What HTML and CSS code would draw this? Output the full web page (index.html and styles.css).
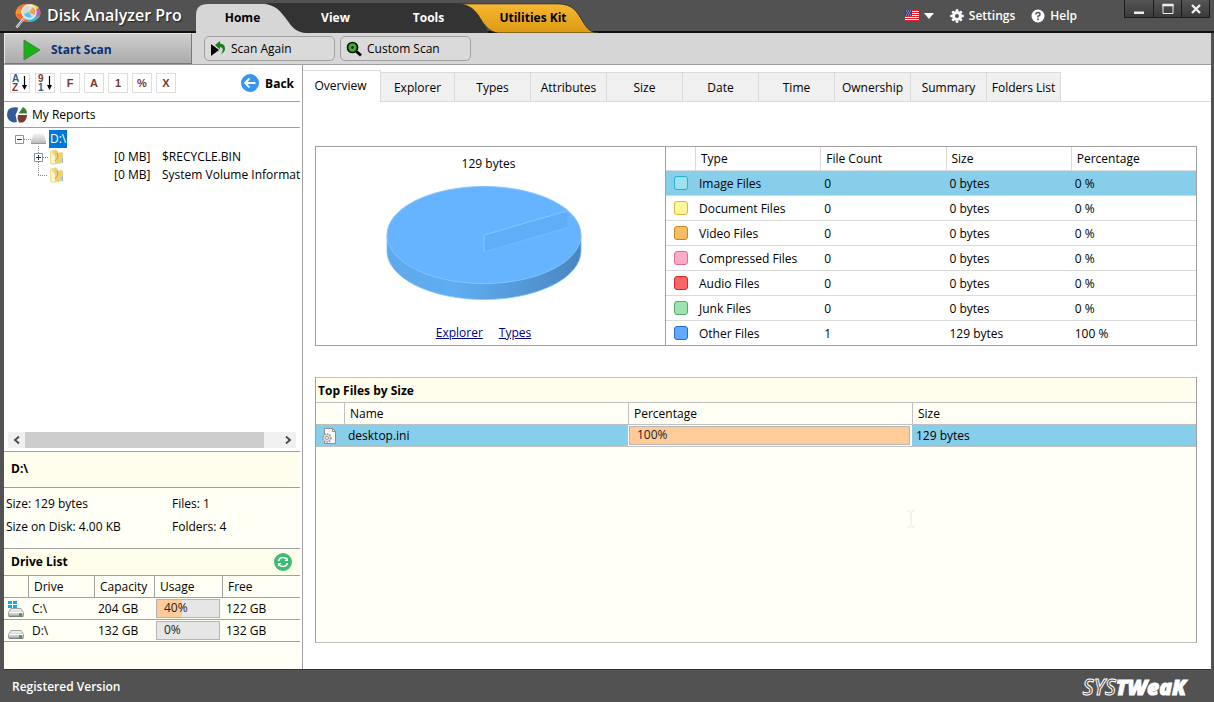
FILE: index.html
```html
<!DOCTYPE html>
<html lang="en">
<head>
<meta charset="utf-8">
<title>Disk Analyzer Pro</title>
<link rel="stylesheet" href="styles.css">
</head>
<body>
<svg class="defs" width="0" height="0" aria-hidden="true">
  <defs>
    <linearGradient id="folderG" x1="0" x2="1" y1="0" y2="0"><stop offset="0" stop-color="#fbf0ae"/><stop offset="1" stop-color="#e3bf4c"/></linearGradient>
    <linearGradient id="driveG" x1="0" x2="0" y1="0" y2="1"><stop offset="0" stop-color="#f4f4f4"/><stop offset="1" stop-color="#b8b8b8"/></linearGradient>
    <symbol id="folder" viewBox="0 0 16 16">
      <path d="M1.500 2l5-1 2 1.500v11.500l-4 1.500-3-1z" fill="url(#folderG)" stroke="#e3cf7c" stroke-width=".6"/>
      <path d="M8 4l4.500-1 1.500 1v9.500l-5 1.500-3-1V8z" fill="#ecd277"/>
      <path d="M2.500 4l3.500 3v8L2.500 14z" fill="#fff6c4"/><path d="M8.500 4v5L6 12" fill="none" stroke="#b79a38" stroke-width=".8"/>
      <path d="M13.500 9v5" stroke="#8fb9d8"/>
    </symbol>
    <symbol id="drive" viewBox="0 0 16 9">
      <path d="M3 .5h10l2.500 4v3q0 1-1 1h-13q-1 0-1-1v-3z" fill="url(#driveG)" stroke="#8a8a8a" stroke-width=".8"/>
      <path d="M1 4.500h14" stroke="#fff"/><path d="M1 8.200h14" stroke="#666" stroke-width=".8"/>
      <path d="M11.500 5.500h2v2h-2z" fill="#35b028" stroke="#555" stroke-width=".5"/>
    </symbol>
  </defs>
</svg>

<header class="titlebar">
  <div class="brand">
    <svg width="28" height="28" viewBox="0 0 28 28" aria-hidden="true">
      <ellipse cx="14" cy="12" rx="12.500" ry="9" fill="#f39a24"/>
      <path d="M14 12L3 7Q8 2 15 3z" fill="#f7742c"/>
      <path d="M14 12L24 6Q28 11 25 16z" fill="#b25fc8"/>
      <path d="M14 12L25 16Q22 21 14 21z" fill="#35b6ea"/>
      <path d="M2 13Q4 19 14 21V12z" fill="#ff5e2e"/>
      <path d="M15 3Q22 3 25 7L14 12z" fill="#ffc83c"/>
      <circle cx="15" cy="11" r="7" fill="#cfe9f7" fill-opacity=".85" stroke="#e7eef2" stroke-width="1.500"/>
      <path d="M15 11l4-5a6 6 0 0 1 1.500 8z" fill="#f6a04c"/><path d="M10 13a6 6 0 0 0 8 3l-3-5z" fill="#5ac4ec"/>
      <path d="M10.500 16.500L2.500 26.500" stroke="#d5d9dc" stroke-width="2.600"/><path d="M10.500 17L3 26" stroke="#8b9298"/>
    </svg>
    <h1>Disk Analyzer Pro</h1>
  </div>
  <nav class="ribbon">
    <svg class="ribbon-shape" width="404" height="30" viewBox="0 0 404 30" aria-hidden="true">
      <defs><linearGradient id="gold" x1="0" x2="0" y1="0" y2="1"><stop offset="0" stop-color="#f7b733"/><stop offset="1" stop-color="#dc9a12"/></linearGradient></defs>
      <path d="M70 0H270Q286 2 292 30H80z" fill="#333"/>
      <path d="M262 .8H362C377 1 381 9 386 17C391 26 395 29.500 402 30H302C292 29 287 20 282 12C277 5 272 2 262 .8z" fill="url(#gold)" stroke="#333"/>
      <path d="M0 30V12Q0 1 12 1H66C80 1 85 9 91 17C97 26 102 29.500 110 30z" fill="#d6d6d6"/>
    </svg>
    <button class="rt home">Home</button>
    <button class="rt">View</button>
    <button class="rt">Tools</button>
    <button class="rt kit">Utilities Kit</button>
  </nav>
  <div class="tools">
    <button class="tool lang" aria-label="Language">
      <svg width="14" height="11" viewBox="0 0 14 11"><path d="M0 0h14v11H0z" fill="#fff"/><path d="M0 .5h14M0 2.500h14M0 4.500h14M0 6.500h14M0 8.500h14M0 10.500h14" stroke="#e8202a"/><path d="M0 0h7v6H0z" fill="#33408e"/><path d="M1 1h1M3 1h1M5 1h1M2 3h1M4 3h1M1 5h1M3 5h1M5 5h1" stroke="#b9c0e8"/></svg>
      <svg width="10" height="6" viewBox="0 0 10 6"><path d="M0 0h10L5 6z" fill="#fff"/></svg>
    </button>
    <button class="tool settings">
      <svg width="14" height="14" viewBox="-7 -7 14 14"><circle r="3.500" fill="none" stroke="#fff" stroke-width="3"/><g stroke="#fff" stroke-width="2.600"><path d="M0-6.700v2M0 6.700v-2M-6.700 0h2M6.700 0h-2M-4.700-4.700l1.500 1.500M4.700 4.700l-1.500-1.500M-4.700 4.700l1.500-1.500M4.700-4.700l-1.500 1.500"/></g></svg>
      Settings</button>
    <button class="tool">
      <svg width="14" height="14" viewBox="0 0 14 14"><circle cx="7" cy="7" r="6.500" fill="#fff"/><path d="M4.900 5.500Q5 3.500 7 3.500T9 5.400Q9 6.500 7 7.300V8.500" fill="none" stroke="#525252" stroke-width="1.500"/><path d="M6.200 9.600h1.600v1.600H6.200z" fill="#525252"/></svg>
      Help</button>
  </div>
  <div class="winbtns">
    <button aria-label="Minimize"><svg width="12" height="12" viewBox="0 0 12 12"><path d="M1 8.500h10v2.500H1z" fill="#eee"/></svg></button>
    <button aria-label="Maximize"><svg width="12" height="12" viewBox="0 0 12 12"><path d="M1 1.500h10v9H1z" fill="none" stroke="#eee"/><path d="M.5 2h11" stroke="#eee" stroke-width="2.500"/></svg></button>
    <button aria-label="Close"><svg width="12" height="12" viewBox="0 0 12 12"><path d="M2 2l8 8M10 2l-8 8" stroke="#eee" stroke-width="2.400"/></svg></button>
  </div>
</header>

<div class="frame">
  <div class="actions">
    <button class="start"><svg width="18" height="22" viewBox="0 0 18 22"><path d="M1 1l16 10L1 21z" fill="#14b414" stroke="#4e7d4e"/></svg>Start Scan</button>
    <button class="act again"><svg width="16" height="16" viewBox="0 0 16 16"><path d="M1 3v12l8-6z" fill="#000"/><path d="M5 4l5-4v2.500Q15 3 15 7.500Q15 11 11 13Q13.500 9 12.500 7.500Q12 6 10 6v2.500z" fill="#17821a"/></svg>Scan Again</button>
    <button class="act"><svg width="16" height="16" viewBox="0 0 16 16"><circle cx="6.500" cy="6.500" r="5" fill="#3fae2a" stroke="#111" stroke-width="1.700"/><path d="M5 6.500h3M6.500 5v3" stroke="#0b3d0b" stroke-width="1.300"/><path d="M10.500 10.500l4.500 4" stroke="#000" stroke-width="3"/></svg>Custom Scan</button>
  </div>

  <div class="main">
    <aside class="side">
      <div class="sortbar">
        <button class="sort" aria-label="Sort by name"><svg width="18" height="18" viewBox="0 0 18 18"><text x="1" y="8" class="s blue">A</text><text x="1" y="17" class="s red">Z</text><path d="M13.500 2v11" stroke="#000" stroke-width="1.200"/><path d="M11 11h5l-2.500 5z"/></svg></button>
        <button class="sort" aria-label="Sort by size"><svg width="18" height="18" viewBox="0 0 18 18"><text x="2" y="8" class="s red">9</text><text x="2" y="17" class="s blue">1</text><path d="M13.500 2v11" stroke="#000" stroke-width="1.200"/><path d="M11 11h5l-2.500 5z"/></svg></button>
        <button>F</button><button>A</button><button>1</button><button>%</button><button>X</button>
        <button class="back"><svg width="18" height="18" viewBox="0 0 18 18"><circle cx="9" cy="9" r="9" fill="#3595f6"/><path d="M14.500 9H4.500M8.500 4.500L4 9l4.500 4.500" fill="none" stroke="#fff" stroke-width="1.800"/></svg>Back</button>
      </div>
      <div class="reports">
        <svg width="22" height="18" viewBox="0 0 22 18"><path d="M12 1.500Q1 0 1 8.500Q1 14 6 16Q9 17 11 15.500L9.500 9Q12 5 12 1.500z" fill="#2f5b96"/><path d="M12.500 7.500L17 1q4 2 4 6.500z" fill="#3f7c35"/><path d="M12 9h9q0 5-4 7.500h-4l-1.500-4z" fill="#7a3a30"/></svg>
        My Reports</div>
      <div class="treewrap">
        <ul class="tree">
          <li><div class="node root"><svg width="35" height="18" viewBox="0 0 35 18"><path d="M12 9.500h7M26.500 16v2" stroke="#888" stroke-dasharray="1 1"/><path d="M3.500 5.500h8v8h-8z" fill="#fff" stroke="#8496a8"/><path d="M5 9.500h5" stroke="#234"/><path d="M22 3.500h9l3 7.500v3H19v-3z" fill="url(#driveG)"/><path d="M19 13.500h15" stroke="#999"/></svg><span class="sel">D:\</span></div>
            <ul>
              <li class="node"><svg width="37" height="18" viewBox="0 0 37 18"><path d="M10.500 0v18M15 9.500h5" stroke="#888" stroke-dasharray="1 1"/><path d="M6.500 5.500h8v8h-8z" fill="#fff" stroke="#8496a8"/><path d="M8 9.500h5M10.500 7v5" stroke="#234"/><use href="#folder" x="21" y="1" width="16" height="16"/></svg><span class="mb">[0 MB]</span><span>$RECYCLE.BIN</span></li>
              <li class="node"><svg width="37" height="18" viewBox="0 0 37 18"><path d="M10.500 0v9M10 9.500h10" stroke="#888" stroke-dasharray="1 1"/><use href="#folder" x="21" y="1" width="16" height="16"/></svg><span class="mb">[0 MB]</span><span>System Volume Informat</span></li>
            </ul>
          </li>
        </ul>
        <div class="hscroll">
          <button aria-label="Scroll left"><svg width="8" height="8" viewBox="0 0 8 8"><path d="M6 .5L2 4l4 3.500" fill="none" stroke="#444" stroke-width="1.800"/></svg></button>
          <div class="track"><div class="thumb"></div></div>
          <button aria-label="Scroll right"><svg width="8" height="8" viewBox="0 0 8 8"><path d="M2 .5L6 4 2 7.500" fill="none" stroke="#444" stroke-width="1.800"/></svg></button>
        </div>
      </div>
      <h2 class="path">D:\</h2>
      <div class="info"><span>Size: 129 bytes</span><span>Files: 1</span><span>Size on Disk: 4.00 KB</span><span>Folders: 4</span></div>
      <div class="dlhead"><h2>Drive List</h2>
        <button aria-label="Refresh"><svg width="18" height="18" viewBox="0 0 18 18"><circle cx="9" cy="9" r="9" fill="#3dbb74"/><path d="M4.500 8Q5.500 4.500 9 4.500Q11.500 4.500 13 6.500M13.500 10Q12.500 13.500 9 13.500Q6.500 13.500 5 11.500" fill="none" stroke="#fff" stroke-width="1.500"/><path d="M14 4.500v3.500h-3.500zM4 13.500v-3.500h3.500z" fill="#fff"/></svg></button>
      </div>
      <table class="drives">
        <colgroup><col class="d1"><col class="d2"><col class="d3"><col class="d4"><col></colgroup>
        <thead><tr><th></th><th>Drive</th><th>Capacity</th><th>Usage</th><th>Free</th></tr></thead>
        <tbody>
          <tr><td><svg width="16" height="17" viewBox="0 0 16 17"><path d="M0 1h4v3H0zM5 1h4v3H5zM0 5h4v3H0zM5 5h4v3H5z" fill="#0fadee"/><use href="#drive" y="8" width="16" height="9"/></svg></td><td>C:\</td><td>204 GB</td><td class="barcell"><div class="bar"><div class="fill" style="width:40%"></div><span>40%</span></div></td><td>122 GB</td></tr>
          <tr><td><svg width="16" height="17" viewBox="0 0 16 17"><use href="#drive" y="8" width="16" height="9"/></svg></td><td>D:\</td><td>132 GB</td><td class="barcell"><div class="bar"><span>0%</span></div></td><td>132 GB</td></tr>
        </tbody>
      </table>
    </aside>

    <main class="content">
      <nav class="tabs">
        <button class="on">Overview</button><button>Explorer</button><button>Types</button><button>Attributes</button><button>Size</button><button>Date</button><button>Time</button><button>Ownership</button><button>Summary</button><button>Folders List</button>
      </nav>
      <div class="panels">
        <section class="overview">
          <div class="chart">
            <div class="total">129 bytes</div>
            <svg width="196" height="116" viewBox="0 0 196 116" role="img" aria-label="Other Files 100%">
              <defs><linearGradient id="pieSide"><stop offset="0" stop-color="#5ea9ea"/><stop offset=".35" stop-color="#60adf3"/><stop offset="1" stop-color="#4a86bf"/></linearGradient></defs>
              <path d="M1 50V66A97 48.500 0 0 0 195 66V50z" fill="url(#pieSide)" stroke="#7cc0ff" stroke-width=".8"/>
              <ellipse cx="98" cy="50" rx="97" ry="48.500" fill="#66b3ff" stroke="#83c4ff"/>
              <path d="M98 50L181 26V42L98 67z" fill="#61aef8"/><path d="M98 67V50L181 26" fill="none" stroke="#86c5ff"/><path d="M98 67L181 43" stroke="#78bcff" stroke-width=".7"/>
            </svg>
            <div class="links"><a href="#explorer">Explorer</a><a href="#types">Types</a></div>
          </div>
          <table class="types">
            <colgroup><col class="t1"><col><col><col><col></colgroup>
            <thead><tr><th></th><th>Type</th><th>File Count</th><th>Size</th><th>Percentage</th></tr></thead>
            <tbody>
              <tr class="hl"><td><i class="sw image"></i></td><td>Image Files</td><td>0</td><td>0 bytes</td><td>0 %</td></tr>
              <tr><td><i class="sw document"></i></td><td>Document Files</td><td>0</td><td>0 bytes</td><td>0 %</td></tr>
              <tr><td><i class="sw video"></i></td><td>Video Files</td><td>0</td><td>0 bytes</td><td>0 %</td></tr>
              <tr><td><i class="sw compressed"></i></td><td>Compressed Files</td><td>0</td><td>0 bytes</td><td>0 %</td></tr>
              <tr><td><i class="sw audio"></i></td><td>Audio Files</td><td>0</td><td>0 bytes</td><td>0 %</td></tr>
              <tr><td><i class="sw junk"></i></td><td>Junk Files</td><td>0</td><td>0 bytes</td><td>0 %</td></tr>
              <tr><td><i class="sw other"></i></td><td>Other Files</td><td>1</td><td>129 bytes</td><td>100 %</td></tr>
            </tbody>
          </table>
        </section>
        <section class="top">
          <h2>Top Files by Size</h2>
          <table class="files">
            <colgroup><col class="f1"><col><col><col></colgroup>
            <thead><tr><th></th><th>Name</th><th>Percentage</th><th>Size</th></tr></thead>
            <tbody><tr class="hl"><td><svg width="16" height="16" viewBox="0 0 16 16"><path d="M3.500.5h8l3 3v12h-11z" fill="#fafafa" stroke="#8d8d8d"/><path d="M11.500.5v3h3" fill="none" stroke="#8d8d8d"/><circle cx="6" cy="10" r="4" fill="#ddd" stroke="#999" stroke-width="1.500" stroke-dasharray="1.600 1"/><circle cx="6" cy="10" r="1.500" fill="#fff" stroke="#999"/></svg></td><td>desktop.ini</td><td class="barcell"><div class="bar"><div class="fill" style="width:100%"></div><span>100%</span></div></td><td>129 bytes</td></tr></tbody>
          </table>
          <svg class="ibeam" width="8" height="18" viewBox="0 0 8 18" aria-hidden="true"><path d="M.5 1h3M4.500 1h3M4 2v14M.5 17h3M4.500 17h3" stroke="#e3e3e6" fill="none"/></svg>
        </section>
      </div>
    </main>
  </div>
</div>

<footer class="status"><span>Registered Version</span><div class="logo"><span class="sys">SYS</span><span class="tweak">TWeaK</span></div></footer>
</body>
</html>
```
FILE: styles.css
```css
* { box-sizing: border-box; }
body {
  margin: 0;
  min-height: 100vh;
  display: flex;
  flex-direction: column;
  background: #525252;
  color: #000;
  font: 12px/18px "Open Sans", "Noto Sans", sans-serif;
}
svg { display: block; flex: none; }
.defs { position: absolute; }
button { margin: 0; padding: 0; border: 0; background: none; font: inherit; color: inherit; }
h1, h2 { margin: 0; font-size: 12px; font-weight: 700; }
ul { margin: 0; padding: 0; list-style: none; }
table { border-collapse: separate; border-spacing: 0; table-layout: fixed; width: 100%; }
th, td { padding: 0; text-align: left; font-weight: 400; white-space: nowrap; overflow: hidden; }

/* Title bar */
.titlebar { display: flex; height: 33px; border-bottom: 2px solid #111; color: #fff; }
.brand { display: flex; width: 196px; padding: 0 0 2px 14px; gap: 5px; align-items: center; }
.brand h1 { font-size: 16px; font-weight: 600; white-space: nowrap; text-shadow: 1px 1px 1px #222; }
.ribbon { position: relative; z-index: 1; display: flex; height: 30px; margin-top: 3px; font-weight: 700; }
.ribbon-shape { position: absolute; left: 0; top: 0; }
.rt { position: relative; width: 93px; }
.rt.home { color: #000; }
.rt.kit { width: 116px; color: #000; }
.tools { display: flex; align-items: center; gap: 16px; margin-left: auto; padding-right: 47px; font-weight: 600; }
.tool { display: flex; align-items: center; gap: 5px; }
.winbtns { display: flex; height: 18px; margin-right: 4px; border: 1px solid #1c1c1c; border-top: 0; }
.winbtns button { width: 28px; display: grid; place-items: center; background: linear-gradient(#555, #3a3a3a); }
.winbtns button + button { border-left: 1px solid #1c1c1c; }

/* Window frame */
.frame { flex: 1; display: flex; flex-direction: column; margin: 0 3px 0 4px; background: #fff; border-bottom: 1px solid #333; }
.actions { display: flex; align-items: center; height: 32px; background: #d6d6d6; border-bottom: 1px solid #a0a0a0; }
.start {
  display: flex; align-items: center; gap: 10px; width: 188px; height: 31px; padding: 2px 0 0 18px; margin-right: 12px;
  border: 1px solid #777; border-top-color: #e8e8e8; border-left-color: #e8e8e8; background: linear-gradient(#cfcfcf, #ababab);
  color: #0b2f75; font-weight: 700;
}
.act {
  display: flex; align-items: center; gap: 5px; width: 131px; height: 25px; padding: 0 5px; margin-right: 5px;
  border: 1px solid #a0a0a0; border-radius: 5px; background: #dadada;
}
.main { flex: 1; display: flex; }

/* Sidebar */
.side { width: 299px; flex: none; display: flex; flex-direction: column; background: #fff; border-right: 1px solid #a0a0a0; }
.side::after { content: ""; height: 27px; margin-right: 2px; background: #fffff5; }
.sortbar { display: flex; gap: 4px; align-items: center; height: 37px; padding: 0 6px; margin-right: 2px; border-bottom: 1px solid #a0a0a0; }
.sortbar button { width: 20px; height: 20px; border: 1px solid #dedede; color: #733a32; font: 700 11px "Liberation Sans", sans-serif; }
.sortbar .sort { margin-right: 1px; }
.sortbar .back { display: flex; align-items: center; gap: 6px; width: auto; margin: 0 0 0 auto; border: 0; color: #000; font: 700 12px "Open Sans", sans-serif; }
.s { font: 700 10px "Liberation Sans", sans-serif; }
.blue { fill: #2f5b96; }
.red { fill: #7d3a35; }
.reports { display: flex; align-items: center; gap: 4px; height: 26px; padding-left: 2px; margin-right: 2px; border-bottom: 1px solid #a0a0a0; }
.treewrap { flex: 1; display: flex; flex-direction: column; justify-content: space-between; padding: 2px 0 3px 4px; margin-right: 2px; border-bottom: 1px solid #a0a0a0; }
.tree { padding-left: 4px; }
.tree ul { padding-left: 16px; }
.node { display: flex; height: 18px; white-space: nowrap; }
.root svg { margin-right: 2px; }
.sel { padding: 0 1px; background: #0078d7; color: #fff; }
.mb { width: 48px; margin-left: 49px; flex: none; }
.hscroll { display: flex; height: 16px; margin-right: 4px; background: #f0f0f0; }
.hscroll button { width: 17px; display: grid; place-items: center; }
.track { flex: 1; display: flex; }
.thumb { width: 94%; background: #cdcdcd; }
.path { height: 36px; padding: 8px 7px; margin-right: 2px; background: #fffeec; border-bottom: 1px solid #a0a0a0; }
.info { display: grid; grid-template-columns: 166px 1fr; align-content: start; row-gap: 5px; height: 61px; padding: 7px 2px; margin-right: 2px; background: #fffff5; border-bottom: 1px solid #a0a0a0; }
.dlhead { display: flex; align-items: center; justify-content: space-between; height: 27px; padding: 0 8px 0 7px; margin-right: 2px; background: #fffeec; border-bottom: 1px solid #a0a0a0; }
.drives { width: auto; margin: 0 2px 0 0; }
.d1 { width: 24px; }
.d2 { width: 66px; }
.d3 { width: 60px; }
.d4 { width: 68px; }
.drives th, .drives td { height: 22px; background: #fffff5; border-bottom: 1px solid #a0a0a0; }
.drives th { padding-left: 5px; }
.drives th + th { border-left: 1px solid #a0a0a0; }
.drives td { padding-left: 4px; }
.drives .barcell { padding: 0 2px; }

.bar { position: relative; height: 19px; background: #e6e6e6; border: 1px solid #b5b5b5; }
.fill { height: 100%; background: #ffcc99; }
.bar span { position: absolute; left: 7px; top: -1px; color: #222; }

/* Content */
.content { flex: 1; min-width: 0; display: flex; flex-direction: column; }
.tabs { display: flex; align-items: flex-end; height: 37px; background: linear-gradient(#dadada, #dadada) bottom / 100% 1px no-repeat; }
.tabs button { width: 76px; height: 30px; padding-top: 2px; background: #f0f0f0; border: 1px solid #dadada; border-left: 0; white-space: nowrap; }
.tabs .on { width: 78px; height: 32px; background: #fff; border-bottom: 0; padding: 0 2px 1px 0; }
.tabs .on + button, .tabs button:last-child { width: 74px; }
.panels { flex: 1; display: flex; flex-direction: column; padding: 44px 14px 26px 12px; gap: 31px; }
.overview { display: grid; grid-template-columns: 350px 1fr; border: 1px solid #a0a0a0; }
.chart { display: flex; flex-direction: column; align-items: center; padding: 8px 4px 3px 0; border-right: 1px solid #a0a0a0; }
.chart svg { margin: 12px 10px auto 0; }
.links { display: flex; gap: 16px; margin-right: 10px; }
.links a { color: #00008b; }
.t1 { width: 29px; }
.types th { height: 24px; padding-left: 5px; border-bottom: 1px solid #dadada; }
.types th + th { border-left: 1px solid #dadada; }
.types td { height: 25px; padding: 1px 0 0 4px; border-bottom: 1px solid #dadada; }
.types td:first-child { padding: 0 0 0 8px; }
.types tr:last-child td { height: 24px; border-bottom: 0; }
.hl td { background: #87ceeb; }
.sw { display: block; width: 14px; height: 14px; border: 1px solid; border-radius: 3px; }
.image { background: #9be3ee; border-color: #24afd0; }
.document { background: #fff59b; border-color: #dcb43a; }
.video { background: #f6bd62; border-color: #c98324; }
.compressed { background: #ffabc9; border-color: #e86a94; }
.audio { background: #fa6565; border-color: #d8282c; }
.junk { background: #9ee2b0; border-color: #55a86e; }
.other { background: #61aaff; border-color: #1f6fca; }

.top { position: relative; flex: 1; background: #fffff5; border: 1px solid #c0c0c0; border-left-color: #a0a0a0; border-right-color: #a0a0a0; }
.top h2 { height: 25px; padding: 4px 2px; background: #fffeec; border-bottom: 1px solid #c0c0c0; }
.f1 { width: 28px; }
.files th, .files td { height: 22px; border-bottom: 1px solid #c0c0c0; }
.files th { padding-left: 5px; }
.files th + th { border-left: 1px solid #c0c0c0; }
.files td { padding-left: 4px; }
.files td:first-child { padding-left: 5px; }
.files .barcell { padding: 0 2px 0 1px; background: #fff; }
.ibeam { position: absolute; right: 281px; bottom: 114px; }

/* Status bar */
.status { display: flex; align-items: center; justify-content: space-between; height: 32px; padding: 2px 28px 0 12px; color: #fff; font-weight: 600; }
.logo { font: italic 700 21px/24px "Open Sans", sans-serif; }
.sys { color: #525252; -webkit-text-stroke: 1px #fff; font-weight: 600; }
.tweak { font-weight: 800; -webkit-text-stroke: 1px #fff; }
```
